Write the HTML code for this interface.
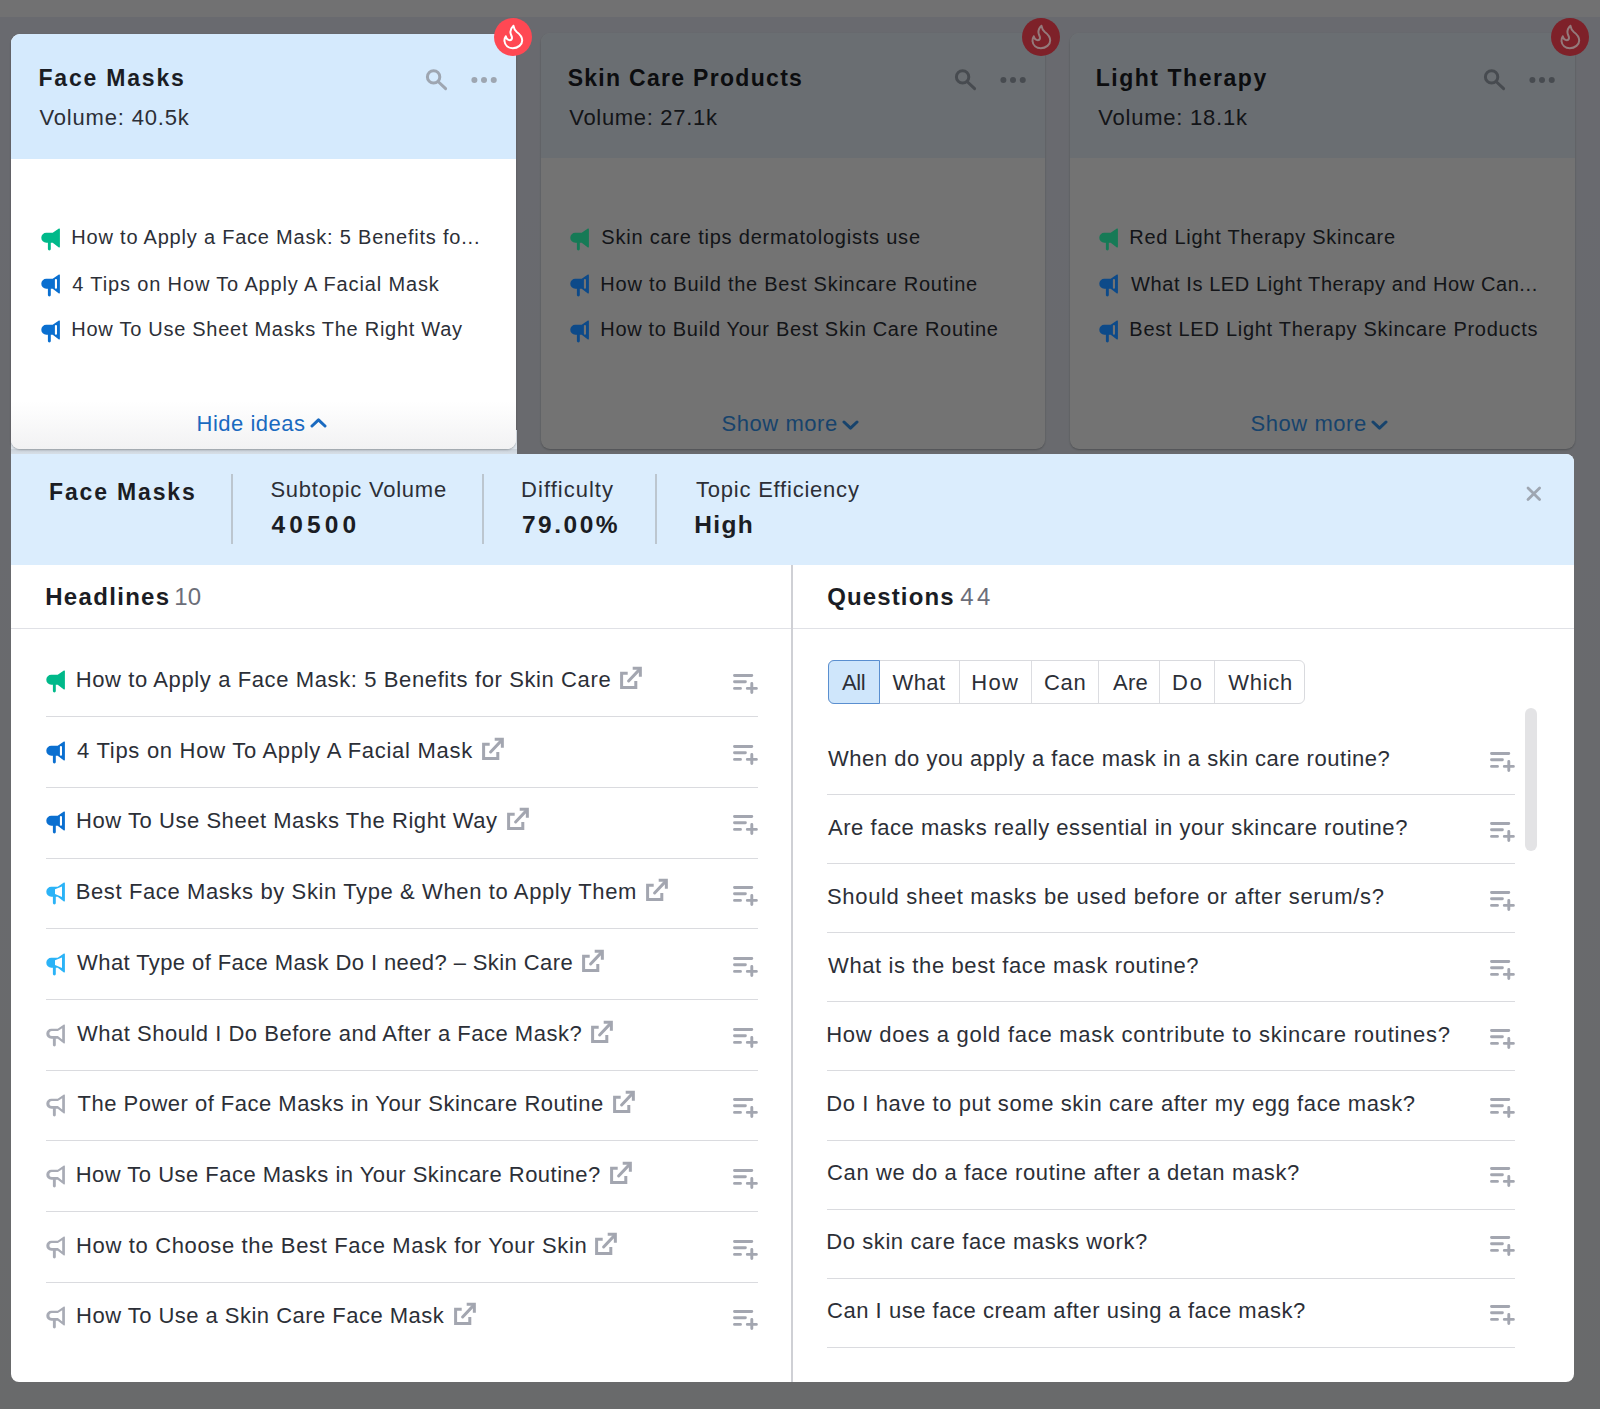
<!DOCTYPE html>
<html><head><meta charset="utf-8">
<style>
*{box-sizing:border-box;margin:0;padding:0}
html,body{width:1600px;height:1409px;overflow:hidden}
body{position:relative;background:#fbfbfd;font-family:"Liberation Sans",sans-serif;color:#1b1d24}
.t{position:absolute;white-space:nowrap;line-height:1}
.ic{position:absolute;display:block}
.container{position:absolute;left:0;top:17px;width:1600px;height:1392px;background:linear-gradient(#e8ecf6,#e9eaee)}
.card{position:absolute;width:505px;height:416px;border-radius:9px;background:#fff;overflow:hidden;box-shadow:0 1px 2px rgba(0,0,0,.25)}
.card .hd{position:absolute;left:0;top:0;width:100%;height:125px;background:#ecf4fc}
.card1 .hd{background:#d5eafd}
.card1 .ft{position:absolute;left:0;bottom:0;width:100%;height:48px;background:linear-gradient(#fff,#f2f2f3)}
.overlay{position:absolute;left:0;top:0;width:1600px;height:1409px;background:rgba(0,0,0,.55)}
.connector{position:absolute;left:11px;top:430px;width:506px;height:25px;background:linear-gradient(#dde4eb 0,#dde4eb 19px,#c9d1d9 19px,#d9e1e9 25px)}
.panel{position:absolute;left:11px;top:454px;width:1563px;height:928px;background:#fff;border-radius:0 8px 8px 8px;overflow:hidden}
.phd{position:absolute;left:11px;top:454px;width:1563px;height:111px;background:#dbedfd;border-radius:0 8px 0 0}
.vd{position:absolute;top:474px;width:2px;height:70px;background:#bcc6cf}
.hl{position:absolute;height:1px;background:#dadbdf}
.hborder{position:absolute;left:11px;top:628px;width:1563px;height:1px;background:#e0e1e6}
.colsep{position:absolute;left:791px;top:565px;width:2px;height:817px;background:#cfd0d5}
.tabs{position:absolute;left:828px;top:660px;width:477px;height:44px;border:1px solid #d9dade;border-radius:6px}
.tab-all{position:absolute;left:828px;top:660px;width:52px;height:44px;background:#cfe6fb;border:1px solid #5a8fd0;border-radius:6px 0 0 6px}
.tabdiv{position:absolute;top:661px;width:1px;height:42px;background:#dcdde1}
.scroll{position:absolute;left:1525px;top:708px;width:12px;height:143px;border-radius:6px;background:#e3e3e5}
</style></head>
<body>
<div class="container"></div>
<div class="card" style="left:541px;top:33px;width:504px"><div class="hd"></div></div>
<div class="card" style="left:1070px;top:33px"><div class="hd"></div></div>
<svg class="ic" style="left:951px;top:65px" width="28" height="28" viewBox="0 0 28 28" fill="none" stroke="#9ea6b1" stroke-width="3" stroke-linecap="round"><circle cx="11.6" cy="11.9" r="6.2"/><path d="M16.6 17L23.6 23.7"/></svg><svg class="ic" style="left:1000px;top:75px" width="28" height="10" viewBox="0 0 28 10" fill="#9ea6b1"><circle cx="3.4" cy="5" r="3"/><circle cx="13" cy="5" r="3"/><circle cx="22.75" cy="5" r="3"/></svg><svg class="ic" style="left:1480px;top:65px" width="28" height="28" viewBox="0 0 28 28" fill="none" stroke="#9ea6b1" stroke-width="3" stroke-linecap="round"><circle cx="11.6" cy="11.9" r="6.2"/><path d="M16.6 17L23.6 23.7"/></svg><svg class="ic" style="left:1529px;top:75px" width="28" height="10" viewBox="0 0 28 10" fill="#9ea6b1"><circle cx="3.4" cy="5" r="3"/><circle cx="13" cy="5" r="3"/><circle cx="22.75" cy="5" r="3"/></svg>
<div class="t" style="left:567.64px;top:66.53px;font-size:23px;letter-spacing:1.300px;color:#1b1d24;font-weight:bold">Skin Care Products</div>
<div class="t" style="left:569.24px;top:107.38px;font-size:22px;letter-spacing:0.686px;color:#2c2f37">Volume: 27.1k</div>
<div class="t" style="left:601.32px;top:227.47px;font-size:20px;letter-spacing:0.789px;color:#2c2f37">Skin care tips dermatologists use</div>
<div class="t" style="left:600.32px;top:273.67px;font-size:20px;letter-spacing:0.750px;color:#2c2f37">How to Build the Best Skincare Routine</div>
<div class="t" style="left:600.32px;top:319.07px;font-size:20px;letter-spacing:0.676px;color:#2c2f37">How to Build Your Best Skin Care Routine</div>
<div class="t" style="left:1095.64px;top:66.53px;font-size:23px;letter-spacing:1.546px;color:#1b1d24;font-weight:bold">Light Therapy</div>
<div class="t" style="left:1098.24px;top:107.38px;font-size:22px;letter-spacing:0.780px;color:#2c2f37">Volume: 18.1k</div>
<div class="t" style="left:1129.32px;top:227.47px;font-size:20px;letter-spacing:0.730px;color:#2c2f37">Red Light Therapy Skincare</div>
<div class="t" style="left:1131.12px;top:273.67px;font-size:20px;letter-spacing:0.588px;color:#2c2f37">What Is LED Light Therapy and How Can...</div>
<div class="t" style="left:1129.32px;top:319.07px;font-size:20px;letter-spacing:0.725px;color:#2c2f37">Best LED Light Therapy Skincare Products</div>
<div class="overlay"></div>
<svg class="ic" style="left:570px;top:228px" width="20" height="24" viewBox="0 0 20 24"><path fill="#167a56" d="M18.9 1.2Q18.9 0 17.9 0.6L11.7 4.8H5.3A5 5 0 0 0 5.3 14.8H11.7L17.9 19.4Q18.9 20 18.9 18.8Z"/><rect fill="#167a56" x="6.9" y="12" width="2.9" height="10.4" rx="1.45"/></svg><svg class="ic" style="left:570px;top:274px" width="20" height="24" viewBox="0 0 20 24"><path fill="#0d4a89" d="M18.9 1.2Q18.9 0 17.9 0.6L11.7 4.8H5.3A5 5 0 0 0 5.3 14.8H11.7L17.9 19.4Q18.9 20 18.9 18.8Z"/><rect fill="#0d4a89" x="6.9" y="12" width="2.9" height="10.4" rx="1.45"/><rect fill="#737373" x="13.9" y="5.1" width="2.1" height="9.6" rx="1"/></svg><svg class="ic" style="left:570px;top:320px" width="20" height="24" viewBox="0 0 20 24"><path fill="#0d4a89" d="M18.9 1.2Q18.9 0 17.9 0.6L11.7 4.8H5.3A5 5 0 0 0 5.3 14.8H11.7L17.9 19.4Q18.9 20 18.9 18.8Z"/><rect fill="#0d4a89" x="6.9" y="12" width="2.9" height="10.4" rx="1.45"/><rect fill="#737373" x="13.9" y="5.1" width="2.1" height="9.6" rx="1"/></svg><svg class="ic" style="left:1099px;top:228px" width="20" height="24" viewBox="0 0 20 24"><path fill="#167a56" d="M18.9 1.2Q18.9 0 17.9 0.6L11.7 4.8H5.3A5 5 0 0 0 5.3 14.8H11.7L17.9 19.4Q18.9 20 18.9 18.8Z"/><rect fill="#167a56" x="6.9" y="12" width="2.9" height="10.4" rx="1.45"/></svg><svg class="ic" style="left:1099px;top:274px" width="20" height="24" viewBox="0 0 20 24"><path fill="#0d4a89" d="M18.9 1.2Q18.9 0 17.9 0.6L11.7 4.8H5.3A5 5 0 0 0 5.3 14.8H11.7L17.9 19.4Q18.9 20 18.9 18.8Z"/><rect fill="#0d4a89" x="6.9" y="12" width="2.9" height="10.4" rx="1.45"/><rect fill="#737373" x="13.9" y="5.1" width="2.1" height="9.6" rx="1"/></svg><svg class="ic" style="left:1099px;top:320px" width="20" height="24" viewBox="0 0 20 24"><path fill="#0d4a89" d="M18.9 1.2Q18.9 0 17.9 0.6L11.7 4.8H5.3A5 5 0 0 0 5.3 14.8H11.7L17.9 19.4Q18.9 20 18.9 18.8Z"/><rect fill="#0d4a89" x="6.9" y="12" width="2.9" height="10.4" rx="1.45"/><rect fill="#737373" x="13.9" y="5.1" width="2.1" height="9.6" rx="1"/></svg><svg class="ic" style="left:842px;top:420px" width="17" height="10" viewBox="0 0 17 10" fill="none" stroke="#17436c" stroke-width="3" stroke-linecap="round" stroke-linejoin="round"><path d="M2 2L8.5 8.2L15 2"/></svg><svg class="ic" style="left:1371px;top:420px" width="17" height="10" viewBox="0 0 17 10" fill="none" stroke="#17436c" stroke-width="3" stroke-linecap="round" stroke-linejoin="round"><path d="M2 2L8.5 8.2L15 2"/></svg>
<div class="t" style="left:721.50px;top:412.68px;font-size:22px;letter-spacing:0.558px;color:#17436c">Show more</div>
<div class="t" style="left:1250.50px;top:412.68px;font-size:22px;letter-spacing:0.558px;color:#17436c">Show more</div>
<svg class="ic" style="left:1022px;top:18px" width="38" height="38" viewBox="0 0 38 38"><circle cx="19" cy="19" r="19" fill="#7e2129"/><path fill="none" stroke="#947a7b" stroke-width="2" stroke-linejoin="round" d="M19.5 7.8C17.3 9.8 16.2 12.5 16.5 14.8C16.8 17 18.2 18.6 18 20.2C17.8 21.6 16.9 22.2 15.8 22.2C14.2 22.2 12.4 20.5 11.8 18.3C10.8 19.6 10.3 21.3 10.5 23.2C10.9 27.3 14.3 30.2 18.8 30.2C24 30.2 28.2 26.6 28.2 22.4C28.2 18.6 25.8 16.2 22.8 14C21 12.6 20 10.8 19.5 7.8Z"/></svg>
<svg class="ic" style="left:1551px;top:18px" width="38" height="38" viewBox="0 0 38 38"><circle cx="19" cy="19" r="19" fill="#7e2129"/><path fill="none" stroke="#947a7b" stroke-width="2" stroke-linejoin="round" d="M19.5 7.8C17.3 9.8 16.2 12.5 16.5 14.8C16.8 17 18.2 18.6 18 20.2C17.8 21.6 16.9 22.2 15.8 22.2C14.2 22.2 12.4 20.5 11.8 18.3C10.8 19.6 10.3 21.3 10.5 23.2C10.9 27.3 14.3 30.2 18.8 30.2C24 30.2 28.2 26.6 28.2 22.4C28.2 18.6 25.8 16.2 22.8 14C21 12.6 20 10.8 19.5 7.8Z"/></svg>
<div class="connector"></div>
<div class="card card1" style="left:11px;top:34px;height:415px"><div class="hd"></div><div class="ft"></div></div>
<svg class="ic" style="left:494px;top:18px" width="38" height="38" viewBox="0 0 38 38"><circle cx="19" cy="19" r="19" fill="#ff4853"/><path fill="none" stroke="#fff" stroke-width="2" stroke-linejoin="round" d="M19.5 7.8C17.3 9.8 16.2 12.5 16.5 14.8C16.8 17 18.2 18.6 18 20.2C17.8 21.6 16.9 22.2 15.8 22.2C14.2 22.2 12.4 20.5 11.8 18.3C10.8 19.6 10.3 21.3 10.5 23.2C10.9 27.3 14.3 30.2 18.8 30.2C24 30.2 28.2 26.6 28.2 22.4C28.2 18.6 25.8 16.2 22.8 14C21 12.6 20 10.8 19.5 7.8Z"/></svg>
<div class="panel"></div>
<div class="phd"></div>
<div class="vd" style="left:231px"></div><div class="vd" style="left:482px"></div><div class="vd" style="left:655px"></div>
<svg class="ic" style="left:1520px;top:480px" width="28" height="28" viewBox="0 0 28 28" fill="none" stroke="#9ea6b1" stroke-width="2.8" stroke-linecap="round"><path d="M8 7.9L19.6 19.5M19.6 7.9L8 19.5"/></svg>
<div class="hborder"></div>
<div class="colsep"></div>
<div class="tabs"></div><div class="tab-all"></div><div class="tabdiv" style="left:959px"></div><div class="tabdiv" style="left:1031px"></div><div class="tabdiv" style="left:1098px"></div><div class="tabdiv" style="left:1159px"></div><div class="tabdiv" style="left:1214px"></div>
<div class="scroll"></div>
<div class="hl" style="left:46px;top:716px;width:712px"></div><div class="hl" style="left:46px;top:787px;width:712px"></div><div class="hl" style="left:46px;top:858px;width:712px"></div><div class="hl" style="left:46px;top:928px;width:712px"></div><div class="hl" style="left:46px;top:999px;width:712px"></div><div class="hl" style="left:46px;top:1070px;width:712px"></div><div class="hl" style="left:46px;top:1140px;width:712px"></div><div class="hl" style="left:46px;top:1211px;width:712px"></div><div class="hl" style="left:46px;top:1282px;width:712px"></div><div class="hl" style="left:827px;top:794px;width:688px"></div><div class="hl" style="left:827px;top:863px;width:688px"></div><div class="hl" style="left:827px;top:932px;width:688px"></div><div class="hl" style="left:827px;top:1001px;width:688px"></div><div class="hl" style="left:827px;top:1070px;width:688px"></div><div class="hl" style="left:827px;top:1140px;width:688px"></div><div class="hl" style="left:827px;top:1209px;width:688px"></div><div class="hl" style="left:827px;top:1278px;width:688px"></div><div class="hl" style="left:827px;top:1347px;width:688px"></div>
<svg class="ic" style="left:41px;top:228px" width="20" height="24" viewBox="0 0 20 24"><path fill="#00b98a" d="M18.9 1.2Q18.9 0 17.9 0.6L11.7 4.8H5.3A5 5 0 0 0 5.3 14.8H11.7L17.9 19.4Q18.9 20 18.9 18.8Z"/><rect fill="#00b98a" x="6.9" y="12" width="2.9" height="10.4" rx="1.45"/></svg><svg class="ic" style="left:41px;top:274px" width="20" height="24" viewBox="0 0 20 24"><path fill="#0a6fd0" d="M18.9 1.2Q18.9 0 17.9 0.6L11.7 4.8H5.3A5 5 0 0 0 5.3 14.8H11.7L17.9 19.4Q18.9 20 18.9 18.8Z"/><rect fill="#0a6fd0" x="6.9" y="12" width="2.9" height="10.4" rx="1.45"/><rect fill="#fff" x="13.9" y="5.1" width="2.1" height="9.6" rx="1"/></svg><svg class="ic" style="left:41px;top:320px" width="20" height="24" viewBox="0 0 20 24"><path fill="#0a6fd0" d="M18.9 1.2Q18.9 0 17.9 0.6L11.7 4.8H5.3A5 5 0 0 0 5.3 14.8H11.7L17.9 19.4Q18.9 20 18.9 18.8Z"/><rect fill="#0a6fd0" x="6.9" y="12" width="2.9" height="10.4" rx="1.45"/><rect fill="#fff" x="13.9" y="5.1" width="2.1" height="9.6" rx="1"/></svg><svg class="ic" style="left:422px;top:65px" width="28" height="28" viewBox="0 0 28 28" fill="none" stroke="#9ea6b1" stroke-width="3" stroke-linecap="round"><circle cx="11.6" cy="11.9" r="6.2"/><path d="M16.6 17L23.6 23.7"/></svg><svg class="ic" style="left:471px;top:75px" width="28" height="10" viewBox="0 0 28 10" fill="#9ea6b1"><circle cx="3.4" cy="5" r="3"/><circle cx="13" cy="5" r="3"/><circle cx="22.75" cy="5" r="3"/></svg><svg class="ic" style="left:310px;top:418px" width="17" height="10" viewBox="0 0 17 10" fill="none" stroke="#1a6ac0" stroke-width="3" stroke-linecap="round" stroke-linejoin="round"><path d="M2 8L8.5 1.8L15 8"/></svg>
<svg class="ic" style="left:46px;top:670px" width="20" height="24" viewBox="0 0 20 24"><path fill="#00b98a" d="M18.9 1.2Q18.9 0 17.9 0.6L11.7 4.8H5.3A5 5 0 0 0 5.3 14.8H11.7L17.9 19.4Q18.9 20 18.9 18.8Z"/><rect fill="#00b98a" x="6.9" y="12" width="2.9" height="10.4" rx="1.45"/></svg><svg class="ic" style="left:615.30px;top:662.00px" width="32" height="32" viewBox="0 0 32 32" fill="none" stroke="#a3a6b0" stroke-width="3"><path d="M12.7 11.35H6.6V25.5H20.8V19"/><path d="M17.7 6.35H25.35V14.8"/><path d="M13.6 19L24.6 7.4" stroke-linecap="round"/></svg><svg class="ic" style="left:728.00px;top:665.00px" width="36" height="36" viewBox="0 0 36 36" fill="none" stroke="#a3a6b0" stroke-width="2.9" stroke-linecap="round"><path d="M6.5 10.5H23.8M6.5 16.8H17.4M6.5 23.4H12.5M19.3 23.4H28.4M23.8 18.4V27.5"/></svg><svg class="ic" style="left:46px;top:741px" width="20" height="24" viewBox="0 0 20 24"><path fill="#0a6fd0" d="M18.9 1.2Q18.9 0 17.9 0.6L11.7 4.8H5.3A5 5 0 0 0 5.3 14.8H11.7L17.9 19.4Q18.9 20 18.9 18.8Z"/><rect fill="#0a6fd0" x="6.9" y="12" width="2.9" height="10.4" rx="1.45"/><rect fill="#fff" x="13.9" y="5.1" width="2.1" height="9.6" rx="1"/></svg><svg class="ic" style="left:477.30px;top:732.72px" width="32" height="32" viewBox="0 0 32 32" fill="none" stroke="#a3a6b0" stroke-width="3"><path d="M12.7 11.35H6.6V25.5H20.8V19"/><path d="M17.7 6.35H25.35V14.8"/><path d="M13.6 19L24.6 7.4" stroke-linecap="round"/></svg><svg class="ic" style="left:728.00px;top:735.72px" width="36" height="36" viewBox="0 0 36 36" fill="none" stroke="#a3a6b0" stroke-width="2.9" stroke-linecap="round"><path d="M6.5 10.5H23.8M6.5 16.8H17.4M6.5 23.4H12.5M19.3 23.4H28.4M23.8 18.4V27.5"/></svg><svg class="ic" style="left:46px;top:811px" width="20" height="24" viewBox="0 0 20 24"><path fill="#0a6fd0" d="M18.9 1.2Q18.9 0 17.9 0.6L11.7 4.8H5.3A5 5 0 0 0 5.3 14.8H11.7L17.9 19.4Q18.9 20 18.9 18.8Z"/><rect fill="#0a6fd0" x="6.9" y="12" width="2.9" height="10.4" rx="1.45"/><rect fill="#fff" x="13.9" y="5.1" width="2.1" height="9.6" rx="1"/></svg><svg class="ic" style="left:502.30px;top:803.44px" width="32" height="32" viewBox="0 0 32 32" fill="none" stroke="#a3a6b0" stroke-width="3"><path d="M12.7 11.35H6.6V25.5H20.8V19"/><path d="M17.7 6.35H25.35V14.8"/><path d="M13.6 19L24.6 7.4" stroke-linecap="round"/></svg><svg class="ic" style="left:728.00px;top:806.44px" width="36" height="36" viewBox="0 0 36 36" fill="none" stroke="#a3a6b0" stroke-width="2.9" stroke-linecap="round"><path d="M6.5 10.5H23.8M6.5 16.8H17.4M6.5 23.4H12.5M19.3 23.4H28.4M23.8 18.4V27.5"/></svg><svg class="ic" style="left:46px;top:882px" width="20" height="24" viewBox="0 0 20 24"><path fill="#2bb3f7" d="M18.9 1.2Q18.9 0 17.9 0.6L11.7 4.8H5.3A5 5 0 0 0 5.3 14.8H11.7L17.9 19.4Q18.9 20 18.9 18.8Z"/><rect fill="#2bb3f7" x="6.9" y="12" width="2.9" height="10.4" rx="1.45"/><path fill="#fff" d="M16 4.5V15.1L9 12.1V7.2Z"/></svg><svg class="ic" style="left:640.80px;top:874.16px" width="32" height="32" viewBox="0 0 32 32" fill="none" stroke="#a3a6b0" stroke-width="3"><path d="M12.7 11.35H6.6V25.5H20.8V19"/><path d="M17.7 6.35H25.35V14.8"/><path d="M13.6 19L24.6 7.4" stroke-linecap="round"/></svg><svg class="ic" style="left:728.00px;top:877.16px" width="36" height="36" viewBox="0 0 36 36" fill="none" stroke="#a3a6b0" stroke-width="2.9" stroke-linecap="round"><path d="M6.5 10.5H23.8M6.5 16.8H17.4M6.5 23.4H12.5M19.3 23.4H28.4M23.8 18.4V27.5"/></svg><svg class="ic" style="left:46px;top:953px" width="20" height="24" viewBox="0 0 20 24"><path fill="#2bb3f7" d="M18.9 1.2Q18.9 0 17.9 0.6L11.7 4.8H5.3A5 5 0 0 0 5.3 14.8H11.7L17.9 19.4Q18.9 20 18.9 18.8Z"/><rect fill="#2bb3f7" x="6.9" y="12" width="2.9" height="10.4" rx="1.45"/><path fill="#fff" d="M16 4.5V15.1L9 12.1V7.2Z"/></svg><svg class="ic" style="left:577.30px;top:944.88px" width="32" height="32" viewBox="0 0 32 32" fill="none" stroke="#a3a6b0" stroke-width="3"><path d="M12.7 11.35H6.6V25.5H20.8V19"/><path d="M17.7 6.35H25.35V14.8"/><path d="M13.6 19L24.6 7.4" stroke-linecap="round"/></svg><svg class="ic" style="left:728.00px;top:947.88px" width="36" height="36" viewBox="0 0 36 36" fill="none" stroke="#a3a6b0" stroke-width="2.9" stroke-linecap="round"><path d="M6.5 10.5H23.8M6.5 16.8H17.4M6.5 23.4H12.5M19.3 23.4H28.4M23.8 18.4V27.5"/></svg><svg class="ic" style="left:46px;top:1024px" width="20" height="24" viewBox="0 0 20 24"><path fill="#a8abb5" d="M18.9 1.2Q18.9 0 17.9 0.6L11.7 4.8H5.3A5 5 0 0 0 5.3 14.8H11.7L17.9 19.4Q18.9 20 18.9 18.8Z"/><rect fill="#a8abb5" x="6.9" y="12" width="2.9" height="10.4" rx="1.45"/><path fill="#fff" d="M16.2 4.2L11.9 7.1H5.9A2.5 2.5 0 0 0 5.9 12.1H11.9L16.2 15.5Z"/></svg><svg class="ic" style="left:586.30px;top:1015.60px" width="32" height="32" viewBox="0 0 32 32" fill="none" stroke="#a3a6b0" stroke-width="3"><path d="M12.7 11.35H6.6V25.5H20.8V19"/><path d="M17.7 6.35H25.35V14.8"/><path d="M13.6 19L24.6 7.4" stroke-linecap="round"/></svg><svg class="ic" style="left:728.00px;top:1018.60px" width="36" height="36" viewBox="0 0 36 36" fill="none" stroke="#a3a6b0" stroke-width="2.9" stroke-linecap="round"><path d="M6.5 10.5H23.8M6.5 16.8H17.4M6.5 23.4H12.5M19.3 23.4H28.4M23.8 18.4V27.5"/></svg><svg class="ic" style="left:46px;top:1094px" width="20" height="24" viewBox="0 0 20 24"><path fill="#a8abb5" d="M18.9 1.2Q18.9 0 17.9 0.6L11.7 4.8H5.3A5 5 0 0 0 5.3 14.8H11.7L17.9 19.4Q18.9 20 18.9 18.8Z"/><rect fill="#a8abb5" x="6.9" y="12" width="2.9" height="10.4" rx="1.45"/><path fill="#fff" d="M16.2 4.2L11.9 7.1H5.9A2.5 2.5 0 0 0 5.9 12.1H11.9L16.2 15.5Z"/></svg><svg class="ic" style="left:607.80px;top:1086.32px" width="32" height="32" viewBox="0 0 32 32" fill="none" stroke="#a3a6b0" stroke-width="3"><path d="M12.7 11.35H6.6V25.5H20.8V19"/><path d="M17.7 6.35H25.35V14.8"/><path d="M13.6 19L24.6 7.4" stroke-linecap="round"/></svg><svg class="ic" style="left:728.00px;top:1089.32px" width="36" height="36" viewBox="0 0 36 36" fill="none" stroke="#a3a6b0" stroke-width="2.9" stroke-linecap="round"><path d="M6.5 10.5H23.8M6.5 16.8H17.4M6.5 23.4H12.5M19.3 23.4H28.4M23.8 18.4V27.5"/></svg><svg class="ic" style="left:46px;top:1165px" width="20" height="24" viewBox="0 0 20 24"><path fill="#a8abb5" d="M18.9 1.2Q18.9 0 17.9 0.6L11.7 4.8H5.3A5 5 0 0 0 5.3 14.8H11.7L17.9 19.4Q18.9 20 18.9 18.8Z"/><rect fill="#a8abb5" x="6.9" y="12" width="2.9" height="10.4" rx="1.45"/><path fill="#fff" d="M16.2 4.2L11.9 7.1H5.9A2.5 2.5 0 0 0 5.9 12.1H11.9L16.2 15.5Z"/></svg><svg class="ic" style="left:605.30px;top:1157.04px" width="32" height="32" viewBox="0 0 32 32" fill="none" stroke="#a3a6b0" stroke-width="3"><path d="M12.7 11.35H6.6V25.5H20.8V19"/><path d="M17.7 6.35H25.35V14.8"/><path d="M13.6 19L24.6 7.4" stroke-linecap="round"/></svg><svg class="ic" style="left:728.00px;top:1160.04px" width="36" height="36" viewBox="0 0 36 36" fill="none" stroke="#a3a6b0" stroke-width="2.9" stroke-linecap="round"><path d="M6.5 10.5H23.8M6.5 16.8H17.4M6.5 23.4H12.5M19.3 23.4H28.4M23.8 18.4V27.5"/></svg><svg class="ic" style="left:46px;top:1236px" width="20" height="24" viewBox="0 0 20 24"><path fill="#a8abb5" d="M18.9 1.2Q18.9 0 17.9 0.6L11.7 4.8H5.3A5 5 0 0 0 5.3 14.8H11.7L17.9 19.4Q18.9 20 18.9 18.8Z"/><rect fill="#a8abb5" x="6.9" y="12" width="2.9" height="10.4" rx="1.45"/><path fill="#fff" d="M16.2 4.2L11.9 7.1H5.9A2.5 2.5 0 0 0 5.9 12.1H11.9L16.2 15.5Z"/></svg><svg class="ic" style="left:590.30px;top:1227.76px" width="32" height="32" viewBox="0 0 32 32" fill="none" stroke="#a3a6b0" stroke-width="3"><path d="M12.7 11.35H6.6V25.5H20.8V19"/><path d="M17.7 6.35H25.35V14.8"/><path d="M13.6 19L24.6 7.4" stroke-linecap="round"/></svg><svg class="ic" style="left:728.00px;top:1230.76px" width="36" height="36" viewBox="0 0 36 36" fill="none" stroke="#a3a6b0" stroke-width="2.9" stroke-linecap="round"><path d="M6.5 10.5H23.8M6.5 16.8H17.4M6.5 23.4H12.5M19.3 23.4H28.4M23.8 18.4V27.5"/></svg><svg class="ic" style="left:46px;top:1306px" width="20" height="24" viewBox="0 0 20 24"><path fill="#a8abb5" d="M18.9 1.2Q18.9 0 17.9 0.6L11.7 4.8H5.3A5 5 0 0 0 5.3 14.8H11.7L17.9 19.4Q18.9 20 18.9 18.8Z"/><rect fill="#a8abb5" x="6.9" y="12" width="2.9" height="10.4" rx="1.45"/><path fill="#fff" d="M16.2 4.2L11.9 7.1H5.9A2.5 2.5 0 0 0 5.9 12.1H11.9L16.2 15.5Z"/></svg><svg class="ic" style="left:448.90px;top:1298.48px" width="32" height="32" viewBox="0 0 32 32" fill="none" stroke="#a3a6b0" stroke-width="3"><path d="M12.7 11.35H6.6V25.5H20.8V19"/><path d="M17.7 6.35H25.35V14.8"/><path d="M13.6 19L24.6 7.4" stroke-linecap="round"/></svg><svg class="ic" style="left:728.00px;top:1301.48px" width="36" height="36" viewBox="0 0 36 36" fill="none" stroke="#a3a6b0" stroke-width="2.9" stroke-linecap="round"><path d="M6.5 10.5H23.8M6.5 16.8H17.4M6.5 23.4H12.5M19.3 23.4H28.4M23.8 18.4V27.5"/></svg><svg class="ic" style="left:1485.10px;top:743.45px" width="36" height="36" viewBox="0 0 36 36" fill="none" stroke="#a3a6b0" stroke-width="2.9" stroke-linecap="round"><path d="M6.5 10.5H23.8M6.5 16.8H17.4M6.5 23.4H12.5M19.3 23.4H28.4M23.8 18.4V27.5"/></svg><svg class="ic" style="left:1485.10px;top:812.55px" width="36" height="36" viewBox="0 0 36 36" fill="none" stroke="#a3a6b0" stroke-width="2.9" stroke-linecap="round"><path d="M6.5 10.5H23.8M6.5 16.8H17.4M6.5 23.4H12.5M19.3 23.4H28.4M23.8 18.4V27.5"/></svg><svg class="ic" style="left:1485.10px;top:881.65px" width="36" height="36" viewBox="0 0 36 36" fill="none" stroke="#a3a6b0" stroke-width="2.9" stroke-linecap="round"><path d="M6.5 10.5H23.8M6.5 16.8H17.4M6.5 23.4H12.5M19.3 23.4H28.4M23.8 18.4V27.5"/></svg><svg class="ic" style="left:1485.10px;top:950.75px" width="36" height="36" viewBox="0 0 36 36" fill="none" stroke="#a3a6b0" stroke-width="2.9" stroke-linecap="round"><path d="M6.5 10.5H23.8M6.5 16.8H17.4M6.5 23.4H12.5M19.3 23.4H28.4M23.8 18.4V27.5"/></svg><svg class="ic" style="left:1485.10px;top:1019.85px" width="36" height="36" viewBox="0 0 36 36" fill="none" stroke="#a3a6b0" stroke-width="2.9" stroke-linecap="round"><path d="M6.5 10.5H23.8M6.5 16.8H17.4M6.5 23.4H12.5M19.3 23.4H28.4M23.8 18.4V27.5"/></svg><svg class="ic" style="left:1485.10px;top:1088.95px" width="36" height="36" viewBox="0 0 36 36" fill="none" stroke="#a3a6b0" stroke-width="2.9" stroke-linecap="round"><path d="M6.5 10.5H23.8M6.5 16.8H17.4M6.5 23.4H12.5M19.3 23.4H28.4M23.8 18.4V27.5"/></svg><svg class="ic" style="left:1485.10px;top:1158.05px" width="36" height="36" viewBox="0 0 36 36" fill="none" stroke="#a3a6b0" stroke-width="2.9" stroke-linecap="round"><path d="M6.5 10.5H23.8M6.5 16.8H17.4M6.5 23.4H12.5M19.3 23.4H28.4M23.8 18.4V27.5"/></svg><svg class="ic" style="left:1485.10px;top:1227.15px" width="36" height="36" viewBox="0 0 36 36" fill="none" stroke="#a3a6b0" stroke-width="2.9" stroke-linecap="round"><path d="M6.5 10.5H23.8M6.5 16.8H17.4M6.5 23.4H12.5M19.3 23.4H28.4M23.8 18.4V27.5"/></svg><svg class="ic" style="left:1485.10px;top:1296.25px" width="36" height="36" viewBox="0 0 36 36" fill="none" stroke="#a3a6b0" stroke-width="2.9" stroke-linecap="round"><path d="M6.5 10.5H23.8M6.5 16.8H17.4M6.5 23.4H12.5M19.3 23.4H28.4M23.8 18.4V27.5"/></svg>
<div class="t" style="left:38.44px;top:66.53px;font-size:23px;letter-spacing:1.801px;color:#1b1d24;font-weight:bold">Face Masks</div>
<div class="t" style="left:39.44px;top:107.38px;font-size:22px;letter-spacing:0.828px;color:#2c2f37">Volume: 40.5k</div>
<div class="t" style="left:71.32px;top:227.47px;font-size:20px;letter-spacing:0.791px;color:#2c2f37">How to Apply a Face Mask: 5 Benefits fo...</div>
<div class="t" style="left:72.32px;top:273.67px;font-size:20px;letter-spacing:0.857px;color:#2c2f37">4 Tips on How To Apply A Facial Mask</div>
<div class="t" style="left:71.32px;top:319.07px;font-size:20px;letter-spacing:0.726px;color:#2c2f37">How To Use Sheet Masks The Right Way</div>
<div class="t" style="left:196.50px;top:412.78px;font-size:22px;letter-spacing:0.505px;color:#1a6ac0">Hide ideas</div>
<div class="t" style="left:49.00px;top:481.23px;font-size:23px;letter-spacing:1.839px;color:#1b1d24;font-weight:bold">Face Masks</div>
<div class="t" style="left:270.44px;top:478.78px;font-size:22px;letter-spacing:0.756px;color:#2c2f37">Subtopic Volume</div>
<div class="t" style="left:271.44px;top:512.66px;font-size:24.5px;letter-spacing:4.129px;color:#1b1d24;font-weight:bold">40500</div>
<div class="t" style="left:521.10px;top:478.78px;font-size:22px;letter-spacing:1.019px;color:#2c2f37">Difficulty</div>
<div class="t" style="left:521.90px;top:512.66px;font-size:24.5px;letter-spacing:2.518px;color:#1b1d24;font-weight:bold">79.00%</div>
<div class="t" style="left:696.00px;top:478.78px;font-size:22px;letter-spacing:0.779px;color:#2c2f37">Topic Efficiency</div>
<div class="t" style="left:694.20px;top:512.66px;font-size:24.5px;letter-spacing:1.378px;color:#1b1d24;font-weight:bold">High</div>
<div class="t" style="left:45.20px;top:585.18px;font-size:24px;letter-spacing:1.321px;color:#1b1d24;font-weight:bold">Headlines</div>
<div class="t" style="left:174.20px;top:585.18px;font-size:24px;letter-spacing:0.252px;color:#6c6e79">10</div>
<div class="t" style="left:827.20px;top:585.18px;font-size:24px;letter-spacing:1.130px;color:#1b1d24;font-weight:bold">Questions</div>
<div class="t" style="left:960.20px;top:585.18px;font-size:24px;letter-spacing:3.572px;color:#6c6e79">44</div>
<div class="t" style="left:75.70px;top:668.98px;font-size:22px;letter-spacing:0.611px;color:#2c2f37">How to Apply a Face Mask: 5 Benefits for Skin Care</div>
<div class="t" style="left:77.10px;top:739.70px;font-size:22px;letter-spacing:0.713px;color:#2c2f37">4 Tips on How To Apply A Facial Mask</div>
<div class="t" style="left:76.10px;top:810.42px;font-size:22px;letter-spacing:0.544px;color:#2c2f37">How To Use Sheet Masks The Right Way</div>
<div class="t" style="left:75.70px;top:881.14px;font-size:22px;letter-spacing:0.617px;color:#2c2f37">Best Face Masks by Skin Type &amp; When to Apply Them</div>
<div class="t" style="left:77.10px;top:951.86px;font-size:22px;letter-spacing:0.405px;color:#2c2f37">What Type of Face Mask Do I need? – Skin Care</div>
<div class="t" style="left:77.10px;top:1022.58px;font-size:22px;letter-spacing:0.505px;color:#2c2f37">What Should I Do Before and After a Face Mask?</div>
<div class="t" style="left:77.50px;top:1093.30px;font-size:22px;letter-spacing:0.491px;color:#2c2f37">The Power of Face Masks in Your Skincare Routine</div>
<div class="t" style="left:75.70px;top:1164.02px;font-size:22px;letter-spacing:0.486px;color:#2c2f37">How To Use Face Masks in Your Skincare Routine?</div>
<div class="t" style="left:76.10px;top:1234.74px;font-size:22px;letter-spacing:0.639px;color:#2c2f37">How to Choose the Best Face Mask for Your Skin</div>
<div class="t" style="left:76.10px;top:1305.46px;font-size:22px;letter-spacing:0.471px;color:#2c2f37">How To Use a Skin Care Face Mask</div>
<div class="t" style="left:828.00px;top:747.63px;font-size:22px;letter-spacing:0.527px;color:#2c2f37">When do you apply a face mask in a skin care routine?</div>
<div class="t" style="left:828.00px;top:816.73px;font-size:22px;letter-spacing:0.542px;color:#2c2f37">Are face masks really essential in your skincare routine?</div>
<div class="t" style="left:827.00px;top:885.83px;font-size:22px;letter-spacing:0.670px;color:#2c2f37">Should sheet masks be used before or after serum/s?</div>
<div class="t" style="left:828.00px;top:954.93px;font-size:22px;letter-spacing:0.613px;color:#2c2f37">What is the best face mask routine?</div>
<div class="t" style="left:826.20px;top:1024.03px;font-size:22px;letter-spacing:0.732px;color:#2c2f37">How does a gold face mask contribute to skincare routines?</div>
<div class="t" style="left:826.20px;top:1093.13px;font-size:22px;letter-spacing:0.601px;color:#2c2f37">Do I have to put some skin care after my egg face mask?</div>
<div class="t" style="left:827.00px;top:1162.23px;font-size:22px;letter-spacing:0.630px;color:#2c2f37">Can we do a face routine after a detan mask?</div>
<div class="t" style="left:826.20px;top:1231.33px;font-size:22px;letter-spacing:0.594px;color:#2c2f37">Do skin care face masks work?</div>
<div class="t" style="left:827.00px;top:1300.43px;font-size:22px;letter-spacing:0.531px;color:#2c2f37">Can I use face cream after using a face mask?</div>
<div class="t" style="left:842.00px;top:671.98px;font-size:22px;letter-spacing:-0.401px;color:#2c2f37">All</div>
<div class="t" style="left:892.48px;top:671.98px;font-size:22px;letter-spacing:0.428px;color:#2c2f37">What</div>
<div class="t" style="left:971.20px;top:671.98px;font-size:22px;letter-spacing:1.338px;color:#2c2f37">How</div>
<div class="t" style="left:1043.98px;top:671.98px;font-size:22px;letter-spacing:0.688px;color:#2c2f37">Can</div>
<div class="t" style="left:1113.00px;top:671.98px;font-size:22px;letter-spacing:0.280px;color:#2c2f37">Are</div>
<div class="t" style="left:1171.94px;top:671.98px;font-size:22px;letter-spacing:1.972px;color:#2c2f37">Do</div>
<div class="t" style="left:1228.22px;top:671.98px;font-size:22px;letter-spacing:0.723px;color:#2c2f37">Which</div>
</body></html>
